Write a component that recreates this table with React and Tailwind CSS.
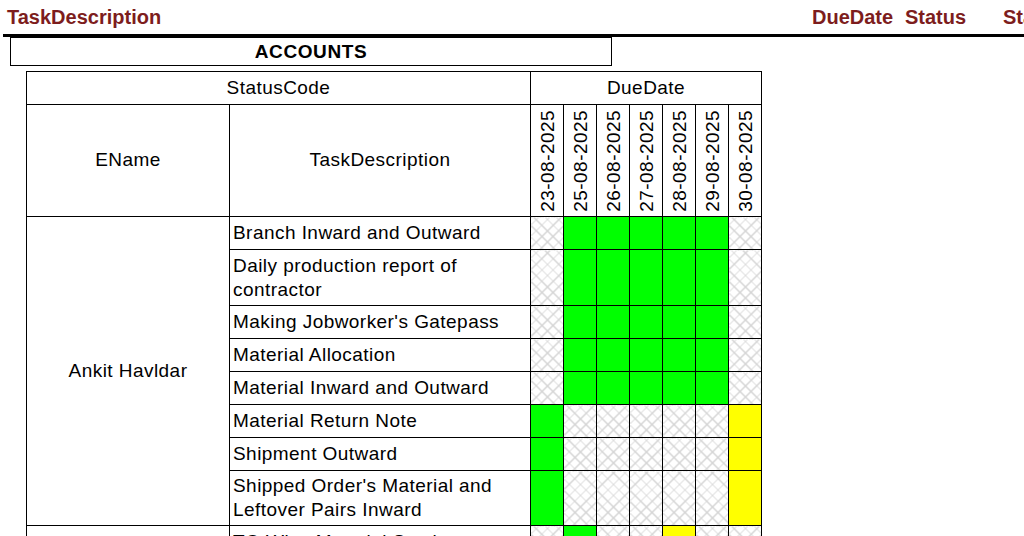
const dates = ['23-08-2025', '25-08-2025', '26-08-2025', '27-08-2025', '28-08-2025', '29-08-2025', '30-08-2025'];

// g = green, y = yellow, h = hatched (no entry)
const tasks = [
  { name: 'Branch Inward and Outward', h: 'h-[33px]', cells: 'hgggggh' },
  { name: 'Daily production report of contractor', h: 'h-[56px]', cells: 'hgggggh' },
  { name: "Making Jobworker's Gatepass", h: 'h-[33px]', cells: 'hgggggh' },
  { name: 'Material Allocation', h: 'h-[33px]', cells: 'hgggggh' },
  { name: 'Material Inward and Outward', h: 'h-[33px]', cells: 'hgggggh' },
  { name: 'Material Return Note', h: 'h-[33px]', cells: 'ghhhhhy' },
  { name: 'Shipment Outward', h: 'h-[33px]', cells: 'ghhhhhy' },
  { name: "Shipped Order's Material and Leftover Pairs Inward", h: 'h-[55px]', cells: 'ghhhhhy' },
];

const hatch =
  'bg-white bg-[image:repeating-linear-gradient(45deg,#d4d4d4_0_1px,transparent_1px_8px),repeating-linear-gradient(-45deg,#d4d4d4_0_1px,transparent_1px_8px)]';

const Cell = ({ kind }) => {
  const cls =
    kind === 'g' ? 'bg-[#00ff00]' : kind === 'y' ? 'bg-[#ffff00]' : hatch;
  return <td className={`border border-black p-0 ${cls}`} />;
};

const App = () => {
  return (
    <div className="w-[1024px] h-[536px] overflow-hidden bg-white font-['Liberation_Sans',Arial,sans-serif] text-black">
      <div className="flex h-[34px] items-center text-[20px] font-bold text-[#7d1d1d] whitespace-nowrap">
        <span className="ml-[7px] w-[805px] shrink-0">TaskDescription</span>
        <span className="w-[93px] shrink-0">DueDate</span>
        <span className="w-[98px] shrink-0">Status</span>
        <span className="shrink-0">Status</span>
      </div>
      <div className="ml-[3px] h-[3px] bg-black" />

      <div className="ml-[10px] w-[602px] h-[29px] border border-black flex items-center justify-center pt-[1px] text-[19px] font-bold tracking-[0.6px]">
        ACCOUNTS
      </div>

      <table className="ml-[26px] mt-[5px] table-fixed border-collapse text-[19px] tracking-[0.45px]">
        <colgroup>
          <col className="w-[203px]" />
          <col className="w-[301px]" />
          {dates.map((d) => (
            <col key={d} className="w-[33px]" />
          ))}
        </colgroup>
        <tbody>
          <tr className="h-[33px]">
            <td colSpan={2} className="border border-black text-center">StatusCode</td>
            <td colSpan={7} className="border border-black text-center">DueDate</td>
          </tr>
          <tr className="h-[112px]">
            <td className="border border-black text-center">EName</td>
            <td className="border border-black text-center">TaskDescription</td>
            {dates.map((d) => (
              <td key={d} className="border border-black p-0">
                <div className="flex h-[110px] items-center justify-center">
                  <span className="[writing-mode:vertical-rl] rotate-180 leading-none">{d}</span>
                </div>
              </td>
            ))}
          </tr>
          {tasks.map((t, i) => (
            <tr key={t.name} className={t.h}>
              {i === 0 && (
                <td rowSpan={tasks.length} className="border border-black text-center align-middle">
                  Ankit Havldar
                </td>
              )}
              <td className="border border-black px-[3px] leading-[24px] align-middle">{t.name}</td>
              {t.cells.split('').map((c, j) => (
                <Cell key={j} kind={c} />
              ))}
            </tr>
          ))}
          <tr className="h-[33px]">
            <td className="border border-black" />
            <td className="border border-black px-[3px] pt-[4px] align-top leading-[24px]">TG Wise Material Stock</td>
            {'hghhyhh'.split('').map((c, j) => (
              <Cell key={j} kind={c} />
            ))}
          </tr>
        </tbody>
      </table>
    </div>
  );
};

export default App;
